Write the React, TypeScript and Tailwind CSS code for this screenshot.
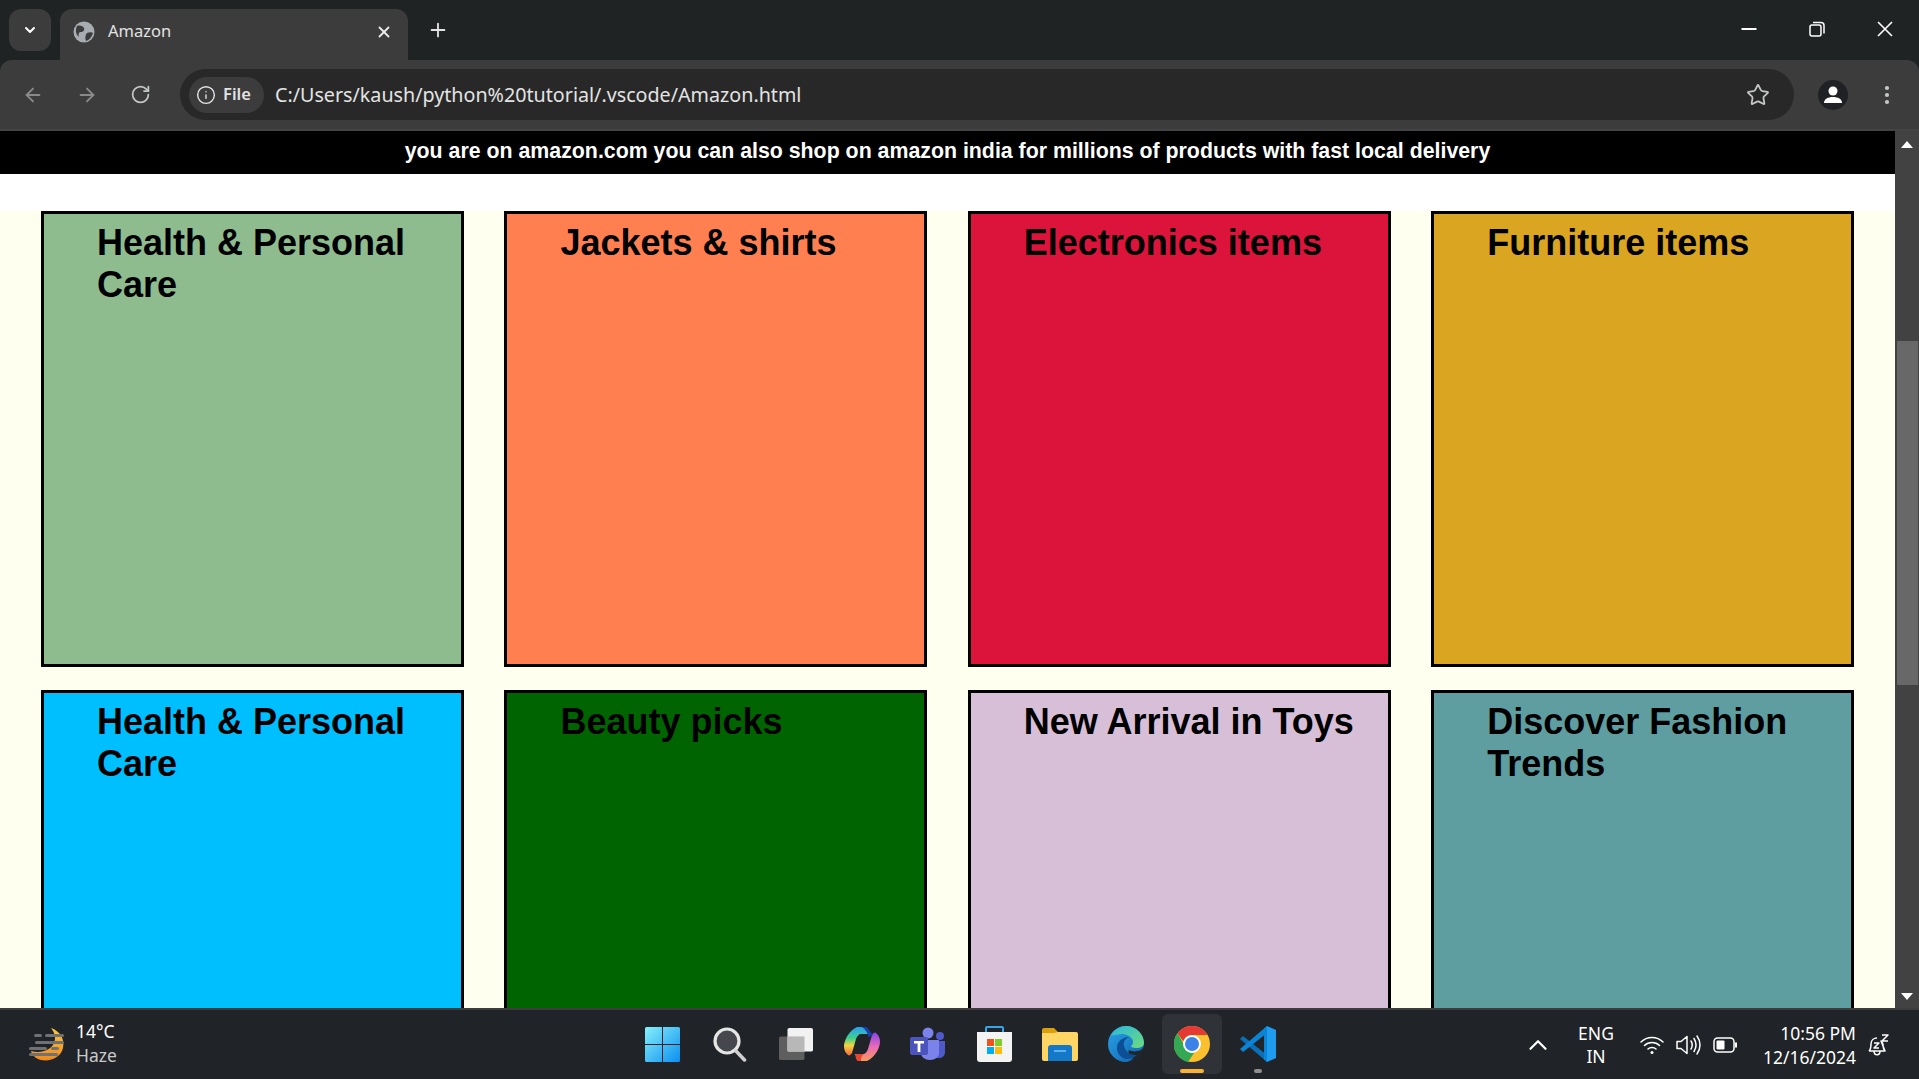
import type { ReactNode } from "react";
import { ArrowLeft, ArrowRight, RotateCw, Info, Star, X, Plus, ChevronDown, ChevronUp, EllipsisVertical } from "lucide-react";

const cards = [
  { t: "Health & Personal Care", c: "bg-[#8fbc8f]" },
  { t: "Jackets & shirts", c: "bg-[#ff7f50]" },
  { t: "Electronics items", c: "bg-[#dc143c]" },
  { t: "Furniture items", c: "bg-[#daa520]" },
  { t: "Health & Personal Care", c: "bg-[#00bfff]" },
  { t: "Beauty picks", c: "bg-[#006400]" },
  { t: "New Arrival in Toys", c: "bg-[#d8bfd8]" },
  { t: "Discover Fashion Trends", c: "bg-[#5f9ea0]" },
];

function Globe() {
  return (
    <svg width="22" height="22" viewBox="0 0 22 22">
      <circle cx="11" cy="11" r="10.5" fill="#a9adb1" />
      <path d="M4 5c3-1 6 0 7 2s-1 4-3 4-3 2-2 5c-3-2-4-7-2-11zM14 12c2-1 5-1 6 0-1 4-4 7-7 8-1-2-1-6 1-8z" fill="#3c3c3c" />
    </svg>
  );
}

function Tabs() {
  return (
    <div className="flex h-[60px] shrink-0 bg-[#202324] pl-[9px] pt-[9px]">
      <div className="flex h-[42px] w-[42px] items-center justify-center rounded-xl bg-[#3c3c3c] text-white">
        <ChevronDown size={16} strokeWidth={3} />
      </div>
      <div className="ml-[9px] flex h-[51px] w-[348px] items-center rounded-t-xl bg-[#3c3c3c] pb-[6px] pl-[13px] pr-[15px]">
        <Globe />
        <span className="ml-[13px] flex-1 text-[16.5px] text-[#e3e3e3] [font-family:'Noto_Sans','Liberation_Sans',sans-serif]">Amazon</span>
        <X size={18} strokeWidth={2.5} className="text-[#e8e8e8]" />
      </div>
      <div className="ml-[17px] flex h-[42px] w-[26px] items-center justify-center text-[#e3e3e3]">
        <Plus size={22} strokeWidth={2} />
      </div>
      <div className="flex-1" />
      <div className="flex h-[42px] items-center gap-[52px] pb-[2px] pr-[26px]">
        <svg width="16" height="16" viewBox="0 0 16 16" fill="white"><rect x="0.500" y="7" width="15" height="2" /></svg>
        <svg width="16" height="16" viewBox="0 0 16 16" fill="none" stroke="white" strokeWidth="1.500">
          <rect x="1" y="4" width="11" height="11" rx="2" />
          <path d="M4 1.500h8a3 3 0 0 1 3 3v8" />
        </svg>
        <svg width="16" height="16" viewBox="0 0 16 16" fill="none" stroke="white" strokeWidth="1.600"><path d="M1 1l14 14M15 1L1 15" /></svg>
      </div>
    </div>
  );
}

function Toolbar() {
  return (
    <div className="flex h-[71px] shrink-0 items-start rounded-t-xl border-b-2 border-[#444444] bg-[#3c3c3c] pl-[22px] pt-[9px]">
      <div className="flex h-[51px] items-center gap-[32px] text-[#8a8a8a]">
        <ArrowLeft size={22} strokeWidth={2} />
        <ArrowRight size={22} strokeWidth={2} />
        <RotateCw size={21} strokeWidth={2} className="text-[#c4c7c5]" />
      </div>
      <div className="ml-[29px] flex h-[51px] w-[1614px] items-center rounded-full bg-[#282828] pl-[9px] pr-[24px]">
        <div className="flex h-[36px] w-[75px] items-center gap-[7px] rounded-full bg-[#3c3c3c] pl-[7px] text-[#e3e3e3]">
          <Info size={20} strokeWidth={1.7} />
          <span className="text-[16.5px] font-semibold [font-family:'Noto_Sans','Liberation_Sans',sans-serif]">File</span>
        </div>
        <span className="ml-[11px] flex-1 text-[19.7px] text-[#e3e3e3] [font-family:'Noto_Sans','Liberation_Sans',sans-serif]">C:/Users/kaush/python%20tutorial/.vscode/Amazon.html</span>
        <Star size={24} strokeWidth={1.8} className="text-[#c4c7c5]" />
      </div>
      <div className="ml-[24px] flex h-[51px] items-center">
        <div className="flex h-[30px] w-[30px] items-center justify-center rounded-full bg-[#202124]">
          <svg width="20" height="20" viewBox="0 0 20 20" fill="white">
            <circle cx="10" cy="6" r="4.500" />
            <path d="M1 18c0-4 4-6 9-6s9 2 9 6z" />
          </svg>
        </div>
        <EllipsisVertical size={24} strokeWidth={2.2} className="ml-[27px] text-[#c4c7c5]" />
      </div>
    </div>
  );
}

function Card({ t, c }: { t: string; c: string }) {
  return (
    <div className={`h-[456px] shrink-0 border-[3px] border-black pl-[53px] pr-[10px] pt-[8px] ${c}`}>
      <h2 className="text-[36px] font-bold leading-[42px] text-black">{t}</h2>
    </div>
  );
}

function Scrollbar() {
  return (
    <div className="flex w-[24px] shrink-0 flex-col items-center bg-[#424242]">
      <svg className="mt-[10px] shrink-0" width="12" height="7" viewBox="0 0 12 7" fill="white"><path d="M6 0l6 7H0z" /></svg>
      <div className="ml-[1px] mt-[193px] h-[344px] w-[21px] shrink-0 bg-[#686868]" />
      <div className="flex-1" />
      <svg className="mb-[8px] shrink-0" width="12" height="7" viewBox="0 0 12 7" fill="white"><path d="M6 7l6-7H0z" /></svg>
    </div>
  );
}

function Page() {
  return (
    <div className="flex min-h-0 flex-1 overflow-hidden">
      <div className="min-w-0 flex-1 overflow-hidden bg-white">
        <div className="flex h-[43px] items-center justify-center bg-black pb-[2px] text-[21.33px] font-bold text-white">
          you are on amazon.com you can also shop on amazon india for millions of products with fast local delivery
        </div>
        <div className="mt-[37px] h-full bg-[#ffffef] pl-[41px]">
          <div className="grid grid-cols-[repeat(4,423px)] gap-x-[40.4px] gap-y-[23px]">
            {cards.map((x, i) => (
              <Card key={i} {...x} />
            ))}
          </div>
        </div>
      </div>
      <Scrollbar />
    </div>
  );
}

function WeatherIcon() {
  return (
    <svg width="38" height="36" viewBox="0 0 38 36">
      <defs>
        <linearGradient id="m" x1="0" y1="0" x2="0" y2="1">
          <stop offset="0" stopColor="#fcc63b" />
          <stop offset="1" stopColor="#f08a1d" />
        </linearGradient>
      </defs>
      <path d="M23 1c9 3 14 11 12 20-2 9-12 14-22 12C8 32 4 28 3 24c10 3 20-1 23-8 2-5 1-10-3-15z" fill="url(#m)" />
      <g fill="#6f7174">
        <rect x="6" y="7" width="8" height="3" rx="1.500" />
        <rect x="17" y="7" width="19" height="3" rx="1.500" />
        <rect x="7" y="14" width="29" height="3" rx="1.500" />
        <rect x="1" y="20" width="18" height="3" rx="1.500" />
        <rect x="23" y="20" width="8" height="3" rx="1.500" />
        <rect x="1" y="26" width="29" height="3" rx="1.500" />
      </g>
    </svg>
  );
}

function WinLogo() {
  return (
    <svg className="mr-[4px]" width="35" height="35" viewBox="0 0 35 35">
      <defs>
        <linearGradient id="w" x1="0" y1="0" x2="1" y2="1">
          <stop offset="0" stopColor="#86f0fb" />
          <stop offset="1" stopColor="#0b8ff0" />
        </linearGradient>
      </defs>
      <path d="M0 1.500a1.500 1.500 0 0 1 1.500-1.500H17v17H0zM18 0h15.500a1.500 1.500 0 0 1 1.500 1.500V17H18zM0 18h17v17H1.500A1.500 1.500 0 0 1 0 33.500zM18 18h17v15.500a1.500 1.500 0 0 1-1.500 1.500H18z" fill="url(#w)" />
    </svg>
  );
}

function SearchIcon() {
  return (
    <svg width="34" height="35" viewBox="0 0 34 35" fill="none">
      <circle cx="14" cy="14" r="12" stroke="#e6e6e6" strokeWidth="3.200" fill="#45474c" />
      <path d="M23 24l8.500 9" stroke="#d0d0d0" strokeWidth="3.500" strokeLinecap="round" />
    </svg>
  );
}

function TaskView() {
  return (
    <svg width="36" height="34" viewBox="0 0 38 36">
      <rect x="1" y="10" width="27" height="25" rx="2" fill="#5e5e5e" />
      <rect x="10" y="1" width="27" height="25" rx="2" fill="#f2f2f2" />
      <rect x="10" y="10" width="18" height="16" fill="#b8b8b8" />
    </svg>
  );
}

function Copilot() {
  return (
    <svg width="36" height="36" viewBox="0 0 36 36">
      <defs>
        <linearGradient id="c1" x1="0" y1="0" x2="0" y2="1">
          <stop offset="0" stopColor="#2a9df4" />
          <stop offset="0.400" stopColor="#3fd18a" />
          <stop offset="0.650" stopColor="#f5d33f" />
          <stop offset="1" stopColor="#f4683f" />
        </linearGradient>
        <linearGradient id="c2" x1="0" y1="0" x2="0" y2="1">
          <stop offset="0" stopColor="#8a45e6" />
          <stop offset="0.500" stopColor="#ea6ab8" />
          <stop offset="1" stopColor="#f79a5a" />
        </linearGradient>
      </defs>
      <path d="M13 1h9l3 7h-8c-2 0-4 2-5 5l-4 14c-1 2-3 3-4 2C0 26-1 20 1 15 3 9 8 3 13 1z" fill="url(#c1)" />
      <path d="M23 35h-9l-3-7h8c2 0 4-2 5-5l4-14c1-2 3-3 4-2 4 3 5 9 3 14-2 6-7 12-12 14z" fill="url(#c2)" />
      <path d="M18 1h4c2 1 5 5 7 9-2-1-3 0-4 2l-1-3c-1-3-3-6-6-8z" fill="#1b3fb0" />
      <path d="M12 28h8c-2 1-3 3-3 7h-3c-2-1-3-4-2-7z" fill="#e8452f" />
    </svg>
  );
}

function Teams() {
  return (
    <svg width="36" height="34" viewBox="0 0 36 34">
      <circle cx="18" cy="6" r="5.500" fill="#7b83eb" />
      <circle cx="30" cy="9" r="4" fill="#5059c9" />
      <path d="M25 14h10v11c0 4-3 6-6 6h-4z" fill="#5059c9" />
      <path d="M11 13h18v13c0 4-4 7-9 7s-9-3-9-7z" fill="#7b83eb" />
      <rect x="0" y="10" width="18" height="18" rx="2" fill="#4b53bc" />
      <path d="M4 14h10v2.500h-3.600V25H7.600v-8.500H4z" fill="white" />
    </svg>
  );
}

function Store() {
  return (
    <svg width="35" height="36" viewBox="0 0 35 36">
      <path d="M9 6V2a1 1 0 0 1 1-1h15a1 1 0 0 1 1 1v4" fill="none" stroke="#35a7e8" strokeWidth="2" />
      <path d="M0 6h35v27a3 3 0 0 1-3 3H3a3 3 0 0 1-3-3z" fill="#f3f3f3" />
      <rect x="10" y="13" width="7" height="7" fill="#f1511b" />
      <rect x="18" y="13" width="7" height="7" fill="#80cc28" />
      <rect x="10" y="21" width="7" height="7" fill="#00adef" />
      <rect x="18" y="21" width="7" height="7" fill="#fbbc09" />
    </svg>
  );
}

function Folder() {
  return (
    <svg width="36" height="34" viewBox="0 0 36 34">
      <path d="M0 3a2 2 0 0 1 2-2h10l5 5h17a2 2 0 0 1 2 2v4H0z" fill="#d9a00b" />
      <path d="M0 6h12l4-1h18a2 2 0 0 1 2 2v25a2 2 0 0 1-2 2H2a2 2 0 0 1-2-2z" fill="#fdd663" />
      <path d="M6 21a3 3 0 0 1 3-3h18a3 3 0 0 1 3 3v13H6z" fill="#1378c8" />
      <rect x="12" y="23" width="12" height="2" fill="#5fb0ea" />
    </svg>
  );
}

function Edge() {
  return (
    <svg width="36" height="36" viewBox="0 0 36 36">
      <defs>
        <linearGradient id="e1" x1="0" y1="0" x2="1" y2="1">
          <stop offset="0" stopColor="#2ab7dd" />
          <stop offset="1" stopColor="#6fdc7a" />
        </linearGradient>
        <linearGradient id="e2" x1="0" y1="0" x2="1" y2="1">
          <stop offset="0" stopColor="#2aa3e8" />
          <stop offset="1" stopColor="#0f62ae" />
        </linearGradient>
      </defs>
      <circle cx="18" cy="18" r="18" fill="url(#e2)" />
      <path d="M3 9C7 3 13 0 18 0c10 0 18 8 18 17 0 3-3 5-8 5-3 0-5-1-5-2 1-1 2-2 2-4 0-4-5-8-11-8-4 0-8 2-11 1z" fill="url(#e1)" />
      <path d="M36 20c0 6-3 11-7 14-4 2-8 2-10 2 4-1 6-3 7-6-3 0-7-2-5-6 2 1 5 2 8 1 3 0 6-2 7-5z" fill="#21262b" />
      <path d="M9 22c0-6 5-11 12-11-4 2-6 5-5 9 1 5 6 9 11 9 1 0 2 0 3-1-3 3-7 5-11 5-5 0-10-5-10-11z" fill="#0c4f94" />
    </svg>
  );
}

function Chrome() {
  return (
    <svg width="36" height="36" viewBox="0 0 36 36">
      <circle cx="18" cy="18" r="18" fill="#fbc02d" />
      <path d="M18 0a18 18 0 0 1 15.600 9H18a9 9 0 0 0-8.600 6.400L3.500 7.300A18 18 0 0 1 18 0z" fill="#e53935" />
      <path d="M3.500 7.300l7.700 13.300a8 8 0 0 0 9 6.200L14 36A18 18 0 0 1 3.500 7.300z" fill="#34a853" />
      <circle cx="18" cy="18" r="9" fill="white" />
      <circle cx="18" cy="18" r="7" fill="#3b82e8" />
    </svg>
  );
}

function VSCode() {
  return (
    <svg width="36" height="38" viewBox="0 0 36 38">
      <path d="M0 14l3-3 24 19v7z" fill="#0a6fb8" />
      <path d="M0 24l3 3L27 8V1z" fill="#0a85d6" />
      <path d="M27 1l9 4v28l-9 4z" fill="#1f9cf0" />
      <path d="M27 1l-3 2.500V34.500L27 37z" fill="#0a85d6" />
      <path d="M24 12v14l-8-7z" fill="#21262b" />
    </svg>
  );
}

function TaskIcon({ children, active, dot }: { children: ReactNode; active?: boolean; dot?: boolean }) {
  return (
    <div className={`relative flex h-[60px] w-[60px] items-center justify-center rounded-md ${active ? "bg-[#2f3236]" : ""}`}>
      {children}
      {active && <span className="absolute bottom-[1px] h-[4px] w-[24px] rounded-full bg-[#f9b234]" />}
      {dot && <span className="absolute bottom-[1px] h-[4px] w-[8px] rounded-full bg-[#8f8f8f]" />}
    </div>
  );
}

function Taskbar() {
  return (
    <div className="flex h-[71px] shrink-0 items-center border-t-2 border-[#3c3c3c] bg-[#202327] text-[17.5px] [font-family:'Noto_Sans','Liberation_Sans',sans-serif]">
      <div className="ml-[28px] flex w-[606px] shrink-0 items-center gap-[10px]">
        <WeatherIcon />
        <div className="flex flex-col pb-[3px] leading-[24px]">
          <span className="text-white">14°C</span>
          <span className="text-[#c9c9c9]">Haze</span>
        </div>
      </div>
      <div className="flex items-center gap-[6px] pb-[1px]">
        <TaskIcon><WinLogo /></TaskIcon>
        <TaskIcon><SearchIcon /></TaskIcon>
        <TaskIcon><TaskView /></TaskIcon>
        <TaskIcon><Copilot /></TaskIcon>
        <TaskIcon><Teams /></TaskIcon>
        <TaskIcon><Store /></TaskIcon>
        <TaskIcon><Folder /></TaskIcon>
        <TaskIcon><Edge /></TaskIcon>
        <TaskIcon active><Chrome /></TaskIcon>
        <TaskIcon dot><VSCode /></TaskIcon>
      </div>
      <div className="flex-1" />
      <ChevronUp size={30} strokeWidth={1.8} className="text-white" />
      <div className="ml-[25px] flex flex-col items-center leading-[23px] text-white">
        <span>ENG</span>
        <span>IN</span>
      </div>
      <div className="ml-[26px] flex items-center gap-[12px] text-white">
        <svg width="24" height="20" viewBox="0 0 24 20" fill="none" stroke="white" strokeWidth="1.500" strokeLinecap="round">
          <path d="M1 7c6-6 16-6 22 0M4.500 10.500c4-4 11-4 15 0M8 14c2-2 6-2 8 0" />
          <circle cx="12" cy="17.500" r="1.500" fill="white" stroke="none" />
        </svg>
        <svg width="25" height="22" viewBox="0 0 25 22" fill="none" stroke="white" strokeWidth="1.500" strokeLinecap="round" strokeLinejoin="round">
          <path d="M1 7.500h4l6-5v17l-6-5H1z" />
          <path d="M15 7c1.500 2.500 1.500 5.500 0 8M18 4.500c2.500 4 2.500 9 0 13M21 2c4 5.500 4 12.500 0 18" />
        </svg>
        <svg width="24" height="16" viewBox="0 0 24 16" fill="none">
          <rect x="1" y="1" width="20" height="14" rx="3.500" stroke="white" strokeWidth="1.500" />
          <rect x="3.500" y="3.500" width="8" height="9" rx="1" fill="white" />
          <rect x="22" y="5.500" width="2" height="5" fill="white" />
        </svg>
      </div>
      <div className="ml-[26px] flex flex-col items-end leading-[24px] text-white">
        <span>10:56 PM</span>
        <span>12/16/2024</span>
      </div>
      <svg className="ml-[12px] mr-[29px]" width="22" height="24" viewBox="0 0 22 24" fill="none" stroke="white" strokeWidth="1.500" strokeLinejoin="round">
        <path d="M1 18c2-2 2-4 2-7 0-4 3-6 6-6M13 8c1 1 2 2 2 4 0 3 0 4 2 6z M1 18h16M6 18c0 5 6 5 6 0" />
        <path d="M6 10h5l-5 5h5M14 2h6l-6 6h6" />
      </svg>
    </div>
  );
}

export default function App() {
  return (
    <div className="flex h-screen w-full flex-col overflow-hidden bg-[#202324] [font-family:'Liberation_Sans',Arial,sans-serif]">
      <Tabs />
      <Toolbar />
      <Page />
      <Taskbar />
    </div>
  );
}
